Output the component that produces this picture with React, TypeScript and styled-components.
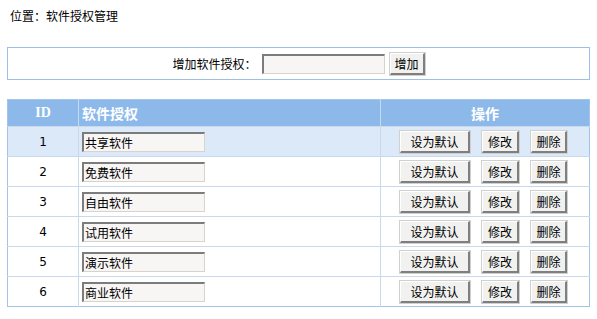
import React from "react";
import styled, { createGlobalStyle } from "styled-components";

const Global = createGlobalStyle`
  html, body { margin: 0; padding: 0; background: #ffffff; }
  body { font-family: "Liberation Sans", "Noto Sans CJK SC", sans-serif; font-size: 12px; color: #000; }
`;

const Page = styled.div`
  padding: 0 7px;
  width: 583px;
`;

const Location = styled.div`
  height: 47px;
  padding: 9px 0 0 3px;
  box-sizing: border-box;
  line-height: 16px;
  font-size: 12px;
`;

const AddBox = styled.div`
  height: 33px;
  box-sizing: border-box;
  border: 1px solid #9ec0e8;
  display: flex;
  align-items: center;
  justify-content: center;
  gap: 5px;
`;

const Label = styled.span`
  font-size: 12px;
`;

const TextInput = styled.input<{ $w: number }>`
  width: ${(p) => p.$w}px;
  height: 20px;
  box-sizing: border-box;
  border-style: solid;
  border-width: 2px 1px 1px 2px;
  border-color: #7c7c7c #d8d4cc #d8d4cc #7c7c7c;
  background: #f8f5f5;
  font-family: "Liberation Sans", "Noto Sans CJK SC", sans-serif;
  font-size: 12px;
  padding: 0 0 0 1px;
  outline: none;
  color: #000;
`;

const Button = styled.button<{ $w: number }>`
  width: ${(p) => p.$w}px;
  height: 22px;
  box-sizing: border-box;
  border-style: solid;
  border-width: 1px 2px 2px 1px;
  border-color: #ffffff #7f7f7f #7f7f7f #ffffff;
  outline: 1px solid #d0d0d0;
  background: #f1f1ef;
  font-family: "Liberation Sans", "Noto Sans CJK SC", sans-serif;
  font-size: 12px;
  padding: 0;
  color: #000;
`;

const Table = styled.table`
  margin-top: 19px;
  width: 583px;
  border-collapse: collapse;
  border: 1px solid #a3c3e8;
  font-size: 12px;
`;

const HeadCell = styled.th<{ $align: string; $w?: number }>`
  background: #8db9ea;
  color: #ffffff;
  font-weight: bold;
  font-family: "Liberation Serif", "Noto Sans CJK SC", serif;
  font-size: 14px;
  height: 26px;
  padding: 0 0 0 ${(p) => (p.$align === "left" ? 3 : 0)}px;
  text-align: ${(p) => p.$align};
  width: ${(p) => (p.$w ? `${p.$w}px` : "auto")};
  border-left: 1px solid #c5d9f0;
  &:first-child { border-left: none; }
`;

const Row = styled.tr<{ $active: boolean }>`
  background: ${(p) => (p.$active ? "#dce9f8" : "#ffffff")};
  height: 30px;
  border-top: 1px solid #c8d9ec;
`;

const Cell = styled.td<{ $align: string }>`
  padding: 0 0 0 ${(p) => (p.$align === "left" ? 3 : 0)}px;
  text-align: ${(p) => p.$align};
  border-left: 1px solid #c8d9ec;
  font-family: "DejaVu Sans", "Noto Sans CJK SC", sans-serif;
  font-size: 12px;
  &:first-child { border-left: none; }
`;

const Actions = styled.div`
  display: flex;
  align-items: center;
  justify-content: center;
  gap: 12px;
  padding-right: 3px;
`;

const rows = [
  { id: 1, name: "共享软件" },
  { id: 2, name: "免费软件" },
  { id: 3, name: "自由软件" },
  { id: 4, name: "试用软件" },
  { id: 5, name: "演示软件" },
  { id: 6, name: "商业软件" },
];

export default function App() {
  return (
    <Page>
      <Global />
      <Location>位置：软件授权管理</Location>
      <AddBox>
        <Label>增加软件授权：</Label>
        <TextInput $w={123} defaultValue="" />
        <Button $w={35}>增加</Button>
      </AddBox>
      <Table>
        <thead>
          <tr>
            <HeadCell $align="center" $w={70}>ID</HeadCell>
            <HeadCell $align="left" $w={298}>软件授权</HeadCell>
            <HeadCell $align="center">操作</HeadCell>
          </tr>
        </thead>
        <tbody>
          {rows.map((r, i) => (
            <Row key={r.id} $active={i === 0}>
              <Cell $align="center">{r.id}</Cell>
              <Cell $align="left">
                <TextInput $w={123} defaultValue={r.name} />
              </Cell>
              <Cell $align="center">
                <Actions>
                  <Button $w={70}>设为默认</Button>
                  <Button $w={37}>修改</Button>
                  <Button $w={36}>删除</Button>
                </Actions>
              </Cell>
            </Row>
          ))}
        </tbody>
      </Table>
    </Page>
  );
}
